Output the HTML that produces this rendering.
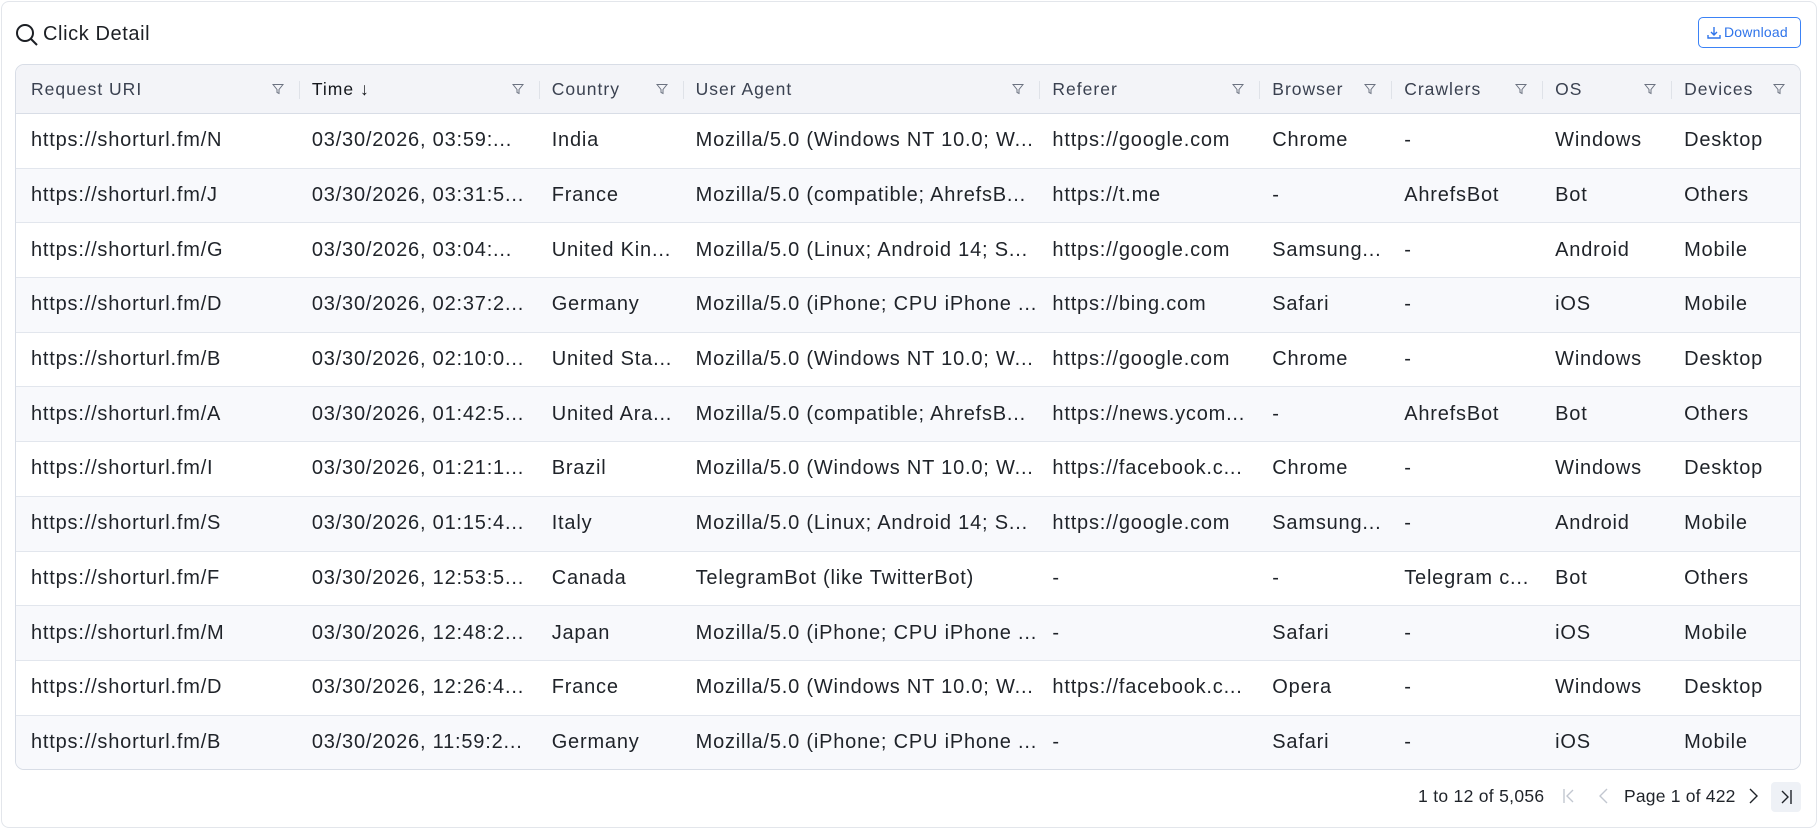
<!DOCTYPE html>
<html><head><meta charset="utf-8"><style>
*{box-sizing:border-box;margin:0;padding:0}
body{width:1818px;height:829px;background:#fff;font-family:"Liberation Sans",sans-serif;color:#1f2329;overflow:hidden;position:relative}
.card{position:absolute;left:1px;top:1px;width:1816px;height:827px;border:1px solid #e3e6eb;border-radius:8px}
.title{position:absolute;left:43px;top:23px;font-size:20px;letter-spacing:.6px;color:#1c1f24}
.dl{position:absolute;left:1698px;top:17px;width:103px;height:31px;border:1px solid #3b82f6;border-radius:5px;color:#2f74ea;font-size:14px;line-height:29px;padding-left:25px;letter-spacing:.2px}
.tbl{position:absolute;left:15px;top:64px;width:1786px;height:706px;border:1px solid #d8dde6;border-radius:9px;overflow:hidden}
.row{display:flex;height:54.7px;border-bottom:1px solid #e2e6ed;align-items:center}
.row.alt{background:#f8f9fc}
.hdr{height:49px;background:#f3f4f8;border-bottom:1px solid #d8dde6}
.c{position:relative;padding-left:13px;white-space:nowrap;overflow:hidden;font-size:20px;letter-spacing:.8px;height:100%;display:flex;align-items:center}
.hdr .c{font-size:17.5px;letter-spacing:1px;color:#3a4150}
.hdr .c.first,.row .c.first{padding-left:15px}
.sep{position:absolute;left:0;top:16px;width:1px;height:18px;background:#dfe2e8}
.f{position:absolute;right:15px;top:18px}
.last{position:absolute;left:1771px;top:782px;width:30px;height:30px;background:#eef1f6;border-radius:4px}
</style></head><body>
<div class="card"></div>
<svg style="position:absolute;left:15px;top:23px" width="24" height="24" viewBox="0 0 24 24" fill="none" stroke="#1c1f24" stroke-width="2"><circle cx="10" cy="10" r="8"/><path d="M16 16l6 6"/></svg>
<div class="title">Click Detail</div>
<div class="dl"><svg style="position:absolute;left:8px;top:8px" width="14" height="14" viewBox="0 0 14 14" fill="none" stroke="#2f74ea" stroke-width="1.4"><path d="M7 1v8M4 6l3 3 3-3M1 9v3h12V9"/></svg>Download</div>
<div class="tbl">
<div class="row hdr" id="h"></div>
<div id="body"></div>
</div>
<div style="position:absolute;left:1418px;top:786px;font-size:17.5px;letter-spacing:.3px">1 to 12 of 5,056</div>
<svg style="position:absolute;left:1561px;top:786px" width="16" height="20" viewBox="0 0 16 20" fill="none" stroke="#c2c7d0" stroke-width="1.4"><path d="M3 3v14M12 4l-6 6 6 6"/></svg>
<svg style="position:absolute;left:1596px;top:786px" width="16" height="20" viewBox="0 0 16 20" fill="none" stroke="#c2c7d0" stroke-width="1.4"><path d="M11 3l-7 7 7 7"/></svg>
<div style="position:absolute;left:1624px;top:786px;font-size:17.5px;letter-spacing:.2px">Page 1 of 422</div>
<svg style="position:absolute;left:1745px;top:786px" width="16" height="20" viewBox="0 0 16 20" fill="none" stroke="#1f2329" stroke-width="1.4"><path d="M5 3l7 7-7 7"/></svg>
<div class="last"></div>
<svg style="position:absolute;left:1778px;top:787px" width="16" height="20" viewBox="0 0 16 20" fill="none" stroke="#1f2329" stroke-width="1.4"><path d="M4 4l6 6-6 6M13 3v14"/></svg>
<script>
var W=[283,240,144,357,220,132,151,129,129];
var H=["Request URI","Time ↓","Country","User Agent","Referer","Browser","Crawlers","OS","Devices"];
var fl='<svg class="f" width="12" height="12" viewBox="0 0 12 12" fill="none" stroke="#6b7280" stroke-width="1"><path d="M1 1.5h10L7 6.5v4L5 9.5v-3z"/></svg>';
var h='';for(var i=0;i<9;i++){h+='<div class="c'+(i==0?' first':'')+'" style="width:'+W[i]+'px'+(i==1?';color:#15181d':'')+'">'+(i?'<span class="sep"></span>':'')+H[i]+fl+'</div>'}
document.getElementById('h').innerHTML=h;
var D=[
["https://shorturl.fm/N","03/30/2026, 03:59:...","India","Mozilla/5.0 (Windows NT 10.0; W...","https://google.com","Chrome","-","Windows","Desktop"],
["https://shorturl.fm/J","03/30/2026, 03:31:5...","France","Mozilla/5.0 (compatible; AhrefsB...","https://t.me","-","AhrefsBot","Bot","Others"],
["https://shorturl.fm/G","03/30/2026, 03:04:...","United Kin...","Mozilla/5.0 (Linux; Android 14; S...","https://google.com","Samsung...","-","Android","Mobile"],
["https://shorturl.fm/D","03/30/2026, 02:37:2...","Germany","Mozilla/5.0 (iPhone; CPU iPhone ...","https://bing.com","Safari","-","iOS","Mobile"],
["https://shorturl.fm/B","03/30/2026, 02:10:0...","United Sta...","Mozilla/5.0 (Windows NT 10.0; W...","https://google.com","Chrome","-","Windows","Desktop"],
["https://shorturl.fm/A","03/30/2026, 01:42:5...","United Ara...","Mozilla/5.0 (compatible; AhrefsB...","https://news.ycom...","-","AhrefsBot","Bot","Others"],
["https://shorturl.fm/I","03/30/2026, 01:21:1...","Brazil","Mozilla/5.0 (Windows NT 10.0; W...","https://facebook.c...","Chrome","-","Windows","Desktop"],
["https://shorturl.fm/S","03/30/2026, 01:15:4...","Italy","Mozilla/5.0 (Linux; Android 14; S...","https://google.com","Samsung...","-","Android","Mobile"],
["https://shorturl.fm/F","03/30/2026, 12:53:5...","Canada","TelegramBot (like TwitterBot)","-","-","Telegram c...","Bot","Others"],
["https://shorturl.fm/M","03/30/2026, 12:48:2...","Japan","Mozilla/5.0 (iPhone; CPU iPhone ...","-","Safari","-","iOS","Mobile"],
["https://shorturl.fm/D","03/30/2026, 12:26:4...","France","Mozilla/5.0 (Windows NT 10.0; W...","https://facebook.c...","Opera","-","Windows","Desktop"],
["https://shorturl.fm/B","03/30/2026, 11:59:2...","Germany","Mozilla/5.0 (iPhone; CPU iPhone ...","-","Safari","-","iOS","Mobile"]];
var b='';D.forEach(function(r,j){b+='<div class="row'+(j%2?' alt':'')+'"'+(j==11?' style="border-bottom:none"':'')+'>';r.forEach(function(t,i){b+='<div class="c'+(i==0?' first':'')+'" style="width:'+W[i]+'px">'+t+'</div>'});b+='</div>'});
document.getElementById('body').innerHTML=b;
</script>
</body></html>
